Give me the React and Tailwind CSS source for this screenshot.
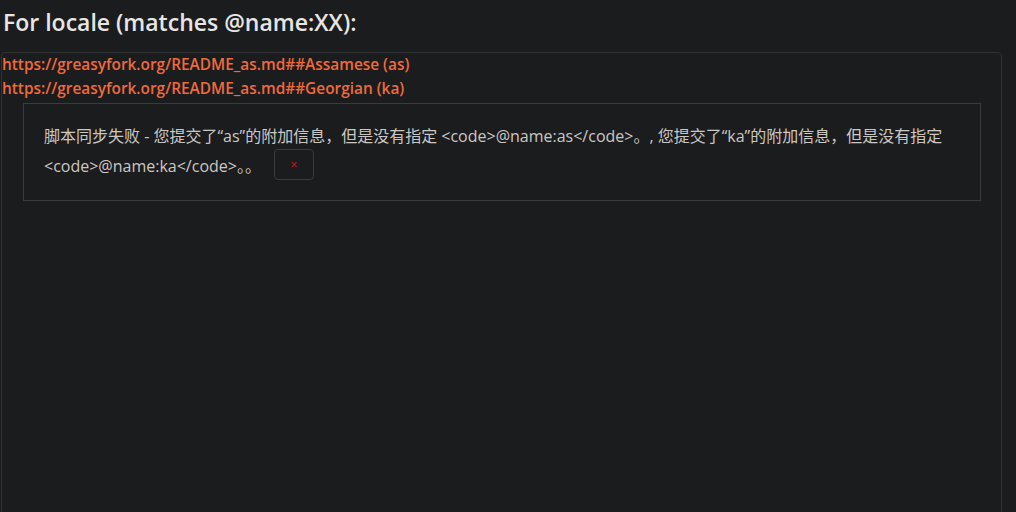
export default function App() {
  return (
    <div
      className="min-h-[512px] bg-[#1b1c1e] text-[#d6d3ce] overflow-hidden"
      style={{ fontFamily: '"Open Sans", "Noto Sans CJK SC", sans-serif' }}
    >
      <h2 className="px-[3px] pt-[7px] text-[23px] leading-[30px] font-semibold text-[#e8e6e3]">
        For locale (matches @name:XX):
      </h2>
      <div className="mt-[15px] ml-[1px] w-[1001px] min-h-[480px] border border-[#2f3032] rounded-[4px]">
        <div className="text-[15.4px] leading-[24px] font-semibold text-[#f06a3c]">
          <div>https://greasyfork.org/README_as.md##Assamese (as)</div>
          <div>https://greasyfork.org/README_as.md##Georgian (ka)</div>
        </div>
        <div className="mt-[2px] ml-[21px] mr-[20px] border border-[#3a3b3d] px-[20px] pt-[17px] pb-[19px] text-[16px] leading-[30px] text-[#cbc8c3]">
          脚本同步失败 - 您提交了“as”的附加信息，但是没有指定 &lt;code&gt;@name:as&lt;/code&gt;。, 您提交了“ka”的附加信息，但是没有指定 &lt;code&gt;@name:ka&lt;/code&gt;。。
          <button className="ml-[13px] -mt-[2px] inline-flex items-center justify-center w-[40px] h-[31px] align-top border border-[#3a3b3d] rounded-[4px] text-[12px] leading-none text-[#d01c1c]">
            ×
          </button>
        </div>
      </div>
    </div>
  )
}
